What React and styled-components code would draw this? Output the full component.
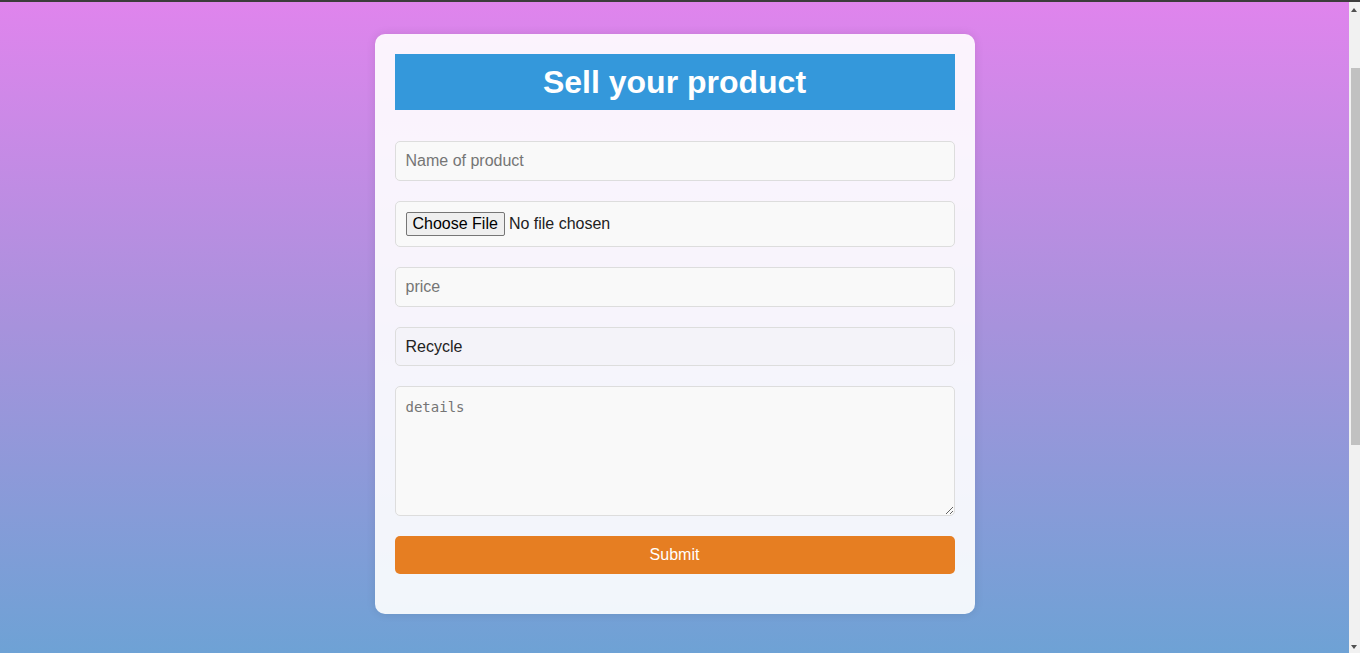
import styled, { createGlobalStyle } from 'styled-components';

const GlobalStyle = createGlobalStyle`
  body {
    margin: 0;
    min-height: 100vh;
    font-family: "Liberation Sans", Arial, sans-serif;
    background: linear-gradient(to bottom, #e084ed 0%, #a792dc 50%, #6ea2d5 100%) fixed;
  }
`

// window chrome seen in the screenshot: thin top edge and a classic scrollbar
const StyledTopEdge = styled.div`
  position: fixed;
  top: 0;
  left: 0;
  right: 0;
  height: 2px;
  background-color: #3c3c3c;
  z-index: 10;
`

const StyledScrollbar = styled.div`
  position: fixed;
  top: 0;
  right: 0;
  bottom: 0;
  width: 11px;
  background-color: #f1f1f1;
  z-index: 9;
`

const StyledScrollArrow = styled.div`
  position: absolute;
  left: 2px;
  ${(props) => (props.$down ? 'bottom: 4px;' : 'top: 8px;')}
  width: 0;
  height: 0;
  border-left: 3.5px solid transparent;
  border-right: 3.5px solid transparent;
  ${(props) => (props.$down ? 'border-top: 4px solid #505050;' : 'border-bottom: 4px solid #505050;')}
`

const StyledScrollThumb = styled.div`
  position: absolute;
  top: 68px;
  left: 2px;
  width: 9px;
  height: 377px;
  background-color: #c1c1c1;
`

const StyledPage = styled.div`
  padding: 34px 11px 40px 0;
  display: flex;
  justify-content: center;
`

const StyledCard = styled.div`
  width: 600px;
  box-sizing: border-box;
  padding: 20px;
  background-color: rgba(255, 255, 255, 0.9);
  border-radius: 10px;
  box-shadow: 0 0 10px rgba(0, 0, 0, 0.1);
`

const StyledTitle = styled.h1`
  margin: 0 0 31px 0;
  padding: 10px 0;
  background-color: #3498db;
  color: #fff;
  font-size: 32px;
  line-height: 36px;
  font-weight: bold;
  text-align: center;
`

const StyledForm = styled.form`
  display: flex;
  flex-direction: column;
  gap: 20px;
`

const StyledField = styled.input`
  box-sizing: border-box;
  width: 100%;
  height: ${(props) => props.$height || 40}px;
  margin: 0;
  padding: 10px;
  font-family: "Liberation Sans", Arial, sans-serif;
  font-size: 16px;
  color: #222;
  background-color: ${(props) => props.$tint || '#f9f9f9'};
  border: 1px solid #ddd;
  border-radius: 5px;
  outline: none;

  &::placeholder {
    color: #757575;
  }

  &::file-selector-button {
    font-family: "Liberation Sans", Arial, sans-serif;
    font-size: 16px;
    color: #000;
    height: 24px;
    margin-right: 4px;
    padding: 0 6px;
    background-color: #efefef;
    border: 1px solid #767676;
    border-radius: 2px;
  }
`

const StyledTextArea = styled.textarea`
  box-sizing: border-box;
  width: 100%;
  height: 130px;
  margin: 0;
  padding: 12px 10px 10px;
  font-family: "DejaVu Sans Mono", monospace;
  font-size: 14px;
  background-color: #f9f9f9;
  border: 1px solid #ddd;
  border-radius: 5px;
  outline: none;

  &::placeholder {
    color: #757575;
  }
`

const StyledSubmit = styled.button`
  height: 38px;
  margin-bottom: 20px;
  border: none;
  border-radius: 5px;
  background-color: #e67e22;
  color: #fff;
  font-family: "Liberation Sans", Arial, sans-serif;
  font-size: 16px;
  cursor: pointer;
`

function App() {
  return (
    <>
      <GlobalStyle />
      <StyledTopEdge />
      <StyledScrollbar>
        <StyledScrollArrow />
        <StyledScrollThumb />
        <StyledScrollArrow $down />
      </StyledScrollbar>
      <StyledPage>
        <StyledCard>
          <StyledTitle>Sell your product</StyledTitle>
          <StyledForm onSubmit={(event) => event.preventDefault()}>
            <StyledField type="text" placeholder="Name of product" />
            <StyledField type="file" $height={46} />
            <StyledField type="text" placeholder="price" />
            <StyledField type="text" defaultValue="Recycle" readOnly $height={39} $tint="#f4f3f9" />
            <StyledTextArea placeholder="details" />
            <StyledSubmit type="submit">Submit</StyledSubmit>
          </StyledForm>
        </StyledCard>
      </StyledPage>
    </>
  );
}

export default App;
